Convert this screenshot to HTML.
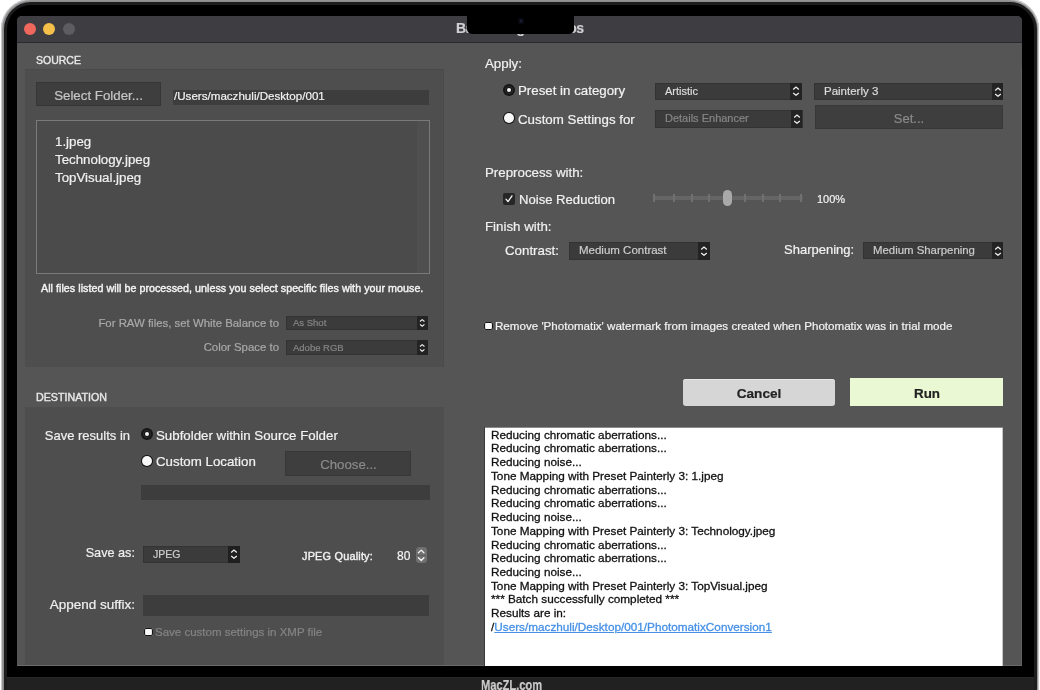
<!DOCTYPE html>
<html><head><meta charset="utf-8"><style>
html,body{margin:0;padding:0;width:1040px;height:690px;overflow:hidden;background:#fff;}
body{position:relative;font-family:"Liberation Sans", sans-serif;}
div,svg{position:absolute;}
.t{white-space:nowrap;will-change:transform;-webkit-text-stroke:0.2px currentColor;}
</style></head><body>
<div style="left:0.6px;top:-1px;width:1038.6px;height:760px;border-radius:30px;background:#8a8a8c;box-shadow:inset 0 0 1.2px 1px #d6d6d8"></div>
<div style="left:3.6px;top:2.3px;width:1033.2px;height:760px;border-radius:27px;background:#1d1d1e"></div>
<div style="left:6.5px;top:5.3px;width:1027px;height:760px;border-radius:24px;background:#000"></div>
<div style="left:6.8px;top:677px;width:1026.8px;height:13px;background:#212121;box-shadow:inset 0 1px 0 #282828"></div>
<div class="t" style="left:481px;top:677.2px;font-size:15px;line-height:15px;color:#cdcdcd;font-weight:bold;transform:scaleX(0.74);transform-origin:0 0;">MacZL.com</div>
<div style="left:17px;top:16px;width:1005px;height:650px;background:#555555;border-radius:5px 5px 0 0;overflow:hidden">
<div style="left:0;top:0;width:1005px;height:26px;background:#3e3d42"></div>
<div style="left:0;top:26px;width:1005px;height:1px;background:#29292b"></div>
</div>
<div style="left:23.8px;top:22.8px;width:12px;height:12px;border-radius:50%;background:#ef675d"></div>
<div style="left:43.4px;top:22.8px;width:12px;height:12px;border-radius:50%;background:#f5c04a"></div>
<div style="left:63.0px;top:22.8px;width:12px;height:12px;border-radius:50%;background:#5d5c61"></div>
<div class="t" style="left:455.60px;top:21px;font-size:14px;line-height:14px;color:#d0d0d2;font-weight:bold;letter-spacing:-0.45px;">Batch Single Photos</div>
<div style="left:467px;top:10px;width:107px;height:24px;background:#000;border-radius:0 0 5px 5px"></div>
<div style="left:517.8px;top:17.5px;width:6px;height:6px;border-radius:50%;background:#0b0c14"></div>
<div style="left:519.8px;top:19.5px;width:2px;height:2px;border-radius:50%;background:#1c2448"></div>
<div class="t" style="left:35.50px;top:55px;font-size:10.5px;line-height:10.5px;color:#e8e8e8;font-weight:normal;-webkit-text-stroke:0.4px #e8e8e8;">SOURCE</div>
<div style="left:25px;top:69px;width:419px;height:298px;background:#4e4e4e;box-shadow:inset 0 1px 0 #4a4a4a, inset -1px 0 0 #4a4a4a"></div>
<div style="left:36px;top:82px;width:125px;height:24px;background:#3e3e3e;box-shadow:inset 0 0 0 1px #363636"></div>
<div class="t" style="left:36.00px;width:125px;text-align:center;top:89px;font-size:13.3px;line-height:13.3px;color:#c6c6c6;font-weight:normal;">Select Folder...</div>
<div style="left:173px;top:90px;width:256px;height:15px;background:#3d3d3d"></div>
<div class="t" style="left:174.30px;top:90px;font-size:11.6px;line-height:11.6px;color:#f2f2f2;font-weight:normal;">/Users/maczhuli/Desktop/001</div>
<div style="left:36px;top:120px;width:394px;height:154px;background:#4b4b4b;box-shadow:inset 0 0 0 1px #7a7a7a"></div>
<div style="left:417px;top:121px;width:12px;height:152px;background:#4f4f4f"></div>
<div class="t" style="left:54.80px;top:135px;font-size:13.3px;line-height:13.3px;color:#f0f0f0;font-weight:normal;">1.jpeg</div>
<div class="t" style="left:55.20px;top:153px;font-size:13.3px;line-height:13.3px;color:#f0f0f0;font-weight:normal;">Technology.jpeg</div>
<div class="t" style="left:55.20px;top:171px;font-size:13.3px;line-height:13.3px;color:#f0f0f0;font-weight:normal;">TopVisual.jpeg</div>
<div class="t" style="left:40.70px;top:283px;font-size:10.7px;line-height:10.7px;color:#f4f4f4;font-weight:normal;-webkit-text-stroke:0.4px #f4f4f4;letter-spacing:0.04px;">All files listed will be processed, unless you select specific files with your mouse.</div>
<div class="t" style="left:29.00px;width:250px;text-align:right;top:318px;font-size:11.4px;line-height:11.4px;color:#a9a9a9;font-weight:normal;">For RAW files, set White Balance to</div>
<div class="t" style="left:29.00px;width:250px;text-align:right;top:342px;font-size:11.4px;line-height:11.4px;color:#a9a9a9;font-weight:normal;">Color Space to</div>
<div style="left:286px;top:315.7px;width:141.5px;height:14.7px;background:#3b3b3b;box-shadow:inset 0 0 0 1px #333"></div>
<div style="left:417.0px;top:315.7px;width:10.5px;height:14.7px;background:#232323"></div>
<svg style="left:419.05px;top:318.25px" width="6.4" height="9.600000000000001" viewBox="0 0 8 12"><path d="M1.2 4.4 L4 2.1 L6.8 4.4 M1.2 8.0 L4 10.3 L6.8 8.0" fill="none" stroke="#f0f0f0" stroke-width="1.40" stroke-linecap="butt" stroke-linejoin="round"/></svg>
<div class="t" style="left:293.00px;top:318px;font-size:9.5px;line-height:9.5px;color:#858585;font-weight:normal;">As Shot</div>
<div style="left:286px;top:340.1px;width:141.5px;height:14.7px;background:#3b3b3b;box-shadow:inset 0 0 0 1px #333"></div>
<div style="left:417.0px;top:340.1px;width:10.5px;height:14.7px;background:#232323"></div>
<svg style="left:419.05px;top:342.65000000000003px" width="6.4" height="9.600000000000001" viewBox="0 0 8 12"><path d="M1.2 4.4 L4 2.1 L6.8 4.4 M1.2 8.0 L4 10.3 L6.8 8.0" fill="none" stroke="#f0f0f0" stroke-width="1.40" stroke-linecap="butt" stroke-linejoin="round"/></svg>
<div class="t" style="left:293.00px;top:343px;font-size:9.5px;line-height:9.5px;color:#858585;font-weight:normal;">Adobe RGB</div>
<div class="t" style="left:35.80px;top:392px;font-size:10.7px;line-height:10.7px;color:#e8e8e8;font-weight:normal;-webkit-text-stroke:0.4px #e8e8e8;">DESTINATION</div>
<div style="left:25px;top:407px;width:419px;height:259px;background:#4e4e4e"></div>
<div class="t" style="left:9.50px;width:120px;text-align:right;top:429px;font-size:13px;line-height:13px;color:#f0f0f0;font-weight:normal;">Save results in</div>
<div style="left:140.8px;top:427.9px;width:12px;height:12px;border-radius:50%;background:#151515"></div>
<div style="left:142.5px;top:429.59999999999997px;width:8.6px;height:8.6px;border-radius:50%;background:#2c2c2c"></div>
<div style="left:143.60000000000002px;top:430.7px;width:6.4px;height:6.4px;border-radius:50%;background:#131313"></div>
<div style="left:144.70000000000002px;top:431.79999999999995px;width:4.2px;height:4.2px;border-radius:50%;background:#f6f6f6"></div>
<div class="t" style="left:156.20px;top:429px;font-size:13.3px;line-height:13.3px;color:#f2f2f2;font-weight:normal;">Subfolder within Source Folder</div>
<div style="left:140.8px;top:455.4px;width:12px;height:12px;border-radius:50%;background:#111"></div>
<div style="left:141.8px;top:456.4px;width:10px;height:10px;border-radius:50%;background:#f8f8f8"></div>
<div class="t" style="left:156.20px;top:455px;font-size:13.3px;line-height:13.3px;color:#f2f2f2;font-weight:normal;">Custom Location</div>
<div style="left:285.3px;top:451.1px;width:125.3px;height:24.5px;background:#3e3e3e;box-shadow:inset 0 0 0 1px #383838, inset 0 -1px 0 #2f2f2f"></div>
<div class="t" style="left:285.50px;width:125px;text-align:center;top:458px;font-size:13.2px;line-height:13.2px;color:#8a8a8a;font-weight:normal;">Choose...</div>
<div style="left:141px;top:484.6px;width:289px;height:15.2px;background:#3d3d3d"></div>
<div class="t" style="left:34.60px;width:100px;text-align:right;top:547px;font-size:12.7px;line-height:12.7px;color:#f0f0f0;font-weight:normal;">Save as:</div>
<div style="left:143.3px;top:545.8px;width:96.5px;height:17px;background:#3b3b3b;box-shadow:inset 0 0 0 1px #333"></div>
<div style="left:228px;top:545.8px;width:11.8px;height:17px;background:#1f1f1f"></div>
<svg style="left:229.9px;top:548.3px" width="8" height="12" viewBox="0 0 8 12"><path d="M1.2 4.4 L4 2.1 L6.8 4.4 M1.2 8.0 L4 10.3 L6.8 8.0" fill="none" stroke="#f0f0f0" stroke-width="1.25" stroke-linecap="butt" stroke-linejoin="round"/></svg>
<div class="t" style="left:153.00px;top:549px;font-size:10.5px;line-height:10.5px;color:#cfcfcf;font-weight:normal;">JPEG</div>
<div class="t" style="left:302.10px;top:551px;font-size:10.9px;line-height:10.9px;color:#f2f2f2;font-weight:normal;-webkit-text-stroke:0.4px #f2f2f2;letter-spacing:0.2px;">JPEG Quality:</div>
<div class="t" style="left:396.70px;top:550px;font-size:12px;line-height:12px;color:#f2f2f2;font-weight:normal;">80</div>
<div style="left:416px;top:547.2px;width:10.8px;height:15.8px;border-radius:3.5px;background:#707070"></div>
<div style="left:416.5px;top:555px;width:9.8px;height:0.8px;background:#5e5e5e"></div>
<svg style="left:416px;top:547.2px" width="11" height="16" viewBox="0 0 11 16"><path d="M2.4 5.8 L5.25 3.1 L7.9 5.8 M2.4 10.8 L5.25 13.5 L7.9 10.8" fill="none" stroke="#f4f4f4" stroke-width="1.3" stroke-linecap="round" stroke-linejoin="round"/></svg>
<div class="t" style="left:14.60px;width:120px;text-align:right;top:598px;font-size:13.5px;line-height:13.5px;color:#f0f0f0;font-weight:normal;">Append suffix:</div>
<div style="left:143.3px;top:595px;width:286px;height:20.5px;background:#3d3d3d"></div>
<div style="left:144.3px;top:627.9px;width:8.5px;height:8px;background:#f8f8f8;border-radius:2px;box-shadow:inset 0 0 0 1.1px #151515"></div>
<div class="t" style="left:155.10px;top:627px;font-size:11.5px;line-height:11.5px;color:#848484;font-weight:normal;">Save custom settings in XMP file</div>
<div style="left:17px;top:665px;width:1005px;height:1px;background:#6a6a6a"></div>
<div style="left:1020.8px;top:66px;width:1.2px;height:600px;background:#5f5f5f"></div>
<div class="t" style="left:485.00px;top:57px;font-size:13.3px;line-height:13.3px;color:#f0f0f0;font-weight:normal;">Apply:</div>
<div style="left:503.2px;top:83.8px;width:12px;height:12px;border-radius:50%;background:#151515"></div>
<div style="left:504.9px;top:85.5px;width:8.6px;height:8.6px;border-radius:50%;background:#2c2c2c"></div>
<div style="left:506.0px;top:86.6px;width:6.4px;height:6.4px;border-radius:50%;background:#131313"></div>
<div style="left:507.09999999999997px;top:87.7px;width:4.2px;height:4.2px;border-radius:50%;background:#f6f6f6"></div>
<div class="t" style="left:518.30px;top:84px;font-size:13.3px;line-height:13.3px;color:#f2f2f2;font-weight:normal;">Preset in category</div>
<div style="left:503.2px;top:112px;width:12px;height:12px;border-radius:50%;background:#111"></div>
<div style="left:504.2px;top:113px;width:10px;height:10px;border-radius:50%;background:#f8f8f8"></div>
<div class="t" style="left:518.30px;top:113px;font-size:13.3px;line-height:13.3px;color:#f2f2f2;font-weight:normal;">Custom Settings for</div>
<div style="left:655px;top:82.8px;width:146.6px;height:17.3px;background:#3b3b3b;box-shadow:inset 0 0 0 1px #333"></div>
<div style="left:790.0px;top:82.8px;width:11.6px;height:17.3px;background:#232323"></div>
<svg style="left:791.8000000000001px;top:85.45px" width="8.0" height="12.0" viewBox="0 0 8 12"><path d="M1.2 4.4 L4 2.1 L6.8 4.4 M1.2 8.0 L4 10.3 L6.8 8.0" fill="none" stroke="#f0f0f0" stroke-width="1.25" stroke-linecap="butt" stroke-linejoin="round"/></svg>
<div class="t" style="left:664.60px;top:86px;font-size:11px;line-height:11px;color:#dcdcdc;font-weight:normal;">Artistic</div>
<div style="left:655px;top:110.2px;width:147.5px;height:17.5px;background:#3b3b3b;box-shadow:inset 0 0 0 1px #333"></div>
<div style="left:790.9px;top:110.2px;width:11.6px;height:17.5px;background:#232323"></div>
<svg style="left:792.7px;top:112.95px" width="8.0" height="12.0" viewBox="0 0 8 12"><path d="M1.2 4.4 L4 2.1 L6.8 4.4 M1.2 8.0 L4 10.3 L6.8 8.0" fill="none" stroke="#f0f0f0" stroke-width="1.25" stroke-linecap="butt" stroke-linejoin="round"/></svg>
<div class="t" style="left:664.60px;top:113px;font-size:11px;line-height:11px;color:#868686;font-weight:normal;">Details Enhancer</div>
<div style="left:814.2px;top:83px;width:188.9px;height:17.4px;background:#3b3b3b;box-shadow:inset 0 0 0 1px #333"></div>
<div style="left:992.1px;top:83px;width:11px;height:17.4px;background:#232323"></div>
<svg style="left:993.6px;top:85.7px" width="8.0" height="12.0" viewBox="0 0 8 12"><path d="M1.2 4.4 L4 2.1 L6.8 4.4 M1.2 8.0 L4 10.3 L6.8 8.0" fill="none" stroke="#f0f0f0" stroke-width="1.25" stroke-linecap="butt" stroke-linejoin="round"/></svg>
<div class="t" style="left:823.70px;top:86px;font-size:11.5px;line-height:11.5px;color:#dcdcdc;font-weight:normal;">Painterly 3</div>
<div style="left:814.9px;top:105.2px;width:188.2px;height:24.2px;background:#3e3e3e;box-shadow:inset 0 0 0 1px #383838, inset 0 -1px 0 #2f2f2f"></div>
<div class="t" style="left:859.00px;width:100px;text-align:center;top:112px;font-size:13px;line-height:13px;color:#8a8a8a;font-weight:normal;">Set...</div>
<div class="t" style="left:485.00px;top:166px;font-size:13.3px;line-height:13.3px;color:#f0f0f0;font-weight:normal;">Preprocess with:</div>
<div style="left:503.2px;top:192.9px;width:11.6px;height:11.8px;background:#262626;border-radius:2px"></div>
<svg style="left:503.2px;top:192.9px" width="12" height="12" viewBox="0 0 12 12"><path d="M3 6.2 L5 8.6 L9 2.8" fill="none" stroke="#f4f4f4" stroke-width="1.3" stroke-linecap="round" stroke-linejoin="round"/></svg>
<div class="t" style="left:519.10px;top:193px;font-size:13.1px;line-height:13.1px;color:#f2f2f2;font-weight:normal;">Noise Reduction</div>
<div style="left:653px;top:196px;width:149.5px;height:4px;background:#656565;border-radius:2px"></div>
<div style="left:652.8px;top:194px;width:2px;height:8px;background:#707070"></div>
<div style="left:672.8px;top:194px;width:2px;height:8px;background:#707070"></div>
<div style="left:690.8px;top:194px;width:2px;height:8px;background:#707070"></div>
<div style="left:708.4px;top:194px;width:2px;height:8px;background:#707070"></div>
<div style="left:743.7px;top:194px;width:2px;height:8px;background:#707070"></div>
<div style="left:761.7px;top:194px;width:2px;height:8px;background:#707070"></div>
<div style="left:779.3px;top:194px;width:2px;height:8px;background:#707070"></div>
<div style="left:800.4px;top:194px;width:2px;height:8px;background:#707070"></div>
<div style="left:722.5px;top:189.5px;width:9px;height:16px;border-radius:4.5px;background:#a9a9a9"></div>
<div class="t" style="left:817.30px;top:194px;font-size:11px;line-height:11px;color:#f2f2f2;font-weight:normal;">100%</div>
<div class="t" style="left:485.00px;top:220px;font-size:13.3px;line-height:13.3px;color:#f0f0f0;font-weight:normal;">Finish with:</div>
<div class="t" style="left:504.80px;top:244px;font-size:13.3px;line-height:13.3px;color:#f2f2f2;font-weight:normal;">Contrast:</div>
<div style="left:569px;top:242px;width:140.5px;height:17.6px;background:#3b3b3b;box-shadow:inset 0 0 0 1px #333"></div>
<div style="left:698.0px;top:242px;width:11.5px;height:17.6px;background:#232323"></div>
<svg style="left:699.75px;top:244.8px" width="8.0" height="12.0" viewBox="0 0 8 12"><path d="M1.2 4.4 L4 2.1 L6.8 4.4 M1.2 8.0 L4 10.3 L6.8 8.0" fill="none" stroke="#f0f0f0" stroke-width="1.25" stroke-linecap="butt" stroke-linejoin="round"/></svg>
<div class="t" style="left:579.20px;top:245px;font-size:11.5px;line-height:11.5px;color:#cdcdcd;font-weight:normal;">Medium Contrast</div>
<div class="t" style="left:783.80px;top:243px;font-size:13px;line-height:13px;color:#f2f2f2;font-weight:normal;">Sharpening:</div>
<div style="left:863.2px;top:242px;width:139.8px;height:17.3px;background:#3b3b3b;box-shadow:inset 0 0 0 1px #333"></div>
<div style="left:992.0px;top:242px;width:11px;height:17.3px;background:#232323"></div>
<svg style="left:993.5px;top:244.65px" width="8.0" height="12.0" viewBox="0 0 8 12"><path d="M1.2 4.4 L4 2.1 L6.8 4.4 M1.2 8.0 L4 10.3 L6.8 8.0" fill="none" stroke="#f0f0f0" stroke-width="1.25" stroke-linecap="butt" stroke-linejoin="round"/></svg>
<div class="t" style="left:873.00px;top:245px;font-size:11.4px;line-height:11.4px;color:#cdcdcd;font-weight:normal;">Medium Sharpening</div>
<div style="left:484.3px;top:321.9px;width:8.5px;height:8.6px;background:#f8f8f8;border-radius:2px;box-shadow:inset 0 0 0 1.1px #151515"></div>
<div class="t" style="left:494.90px;top:320px;font-size:11.6px;line-height:11.6px;color:#f2f2f2;font-weight:normal;">Remove 'Photomatix' watermark from images created when Photomatix was in trial mode</div>
<div style="left:682.5px;top:379.1px;width:152.4px;height:26.6px;border-radius:3px;background:#d6d6d6;box-shadow:inset 0 1px 0 #e6e6e6"></div>
<div class="t" style="left:683.70px;width:150px;text-align:center;top:387px;font-size:13.6px;line-height:13.6px;color:#222;font-weight:bold;">Cancel</div>
<div style="left:850px;top:378.4px;width:153.2px;height:27.7px;background:#eaf8d3"></div>
<div class="t" style="left:851.60px;width:150px;text-align:center;top:387px;font-size:13.4px;line-height:13.4px;color:#222;font-weight:bold;">Run</div>
<div style="left:484.3px;top:427.3px;width:518.7px;height:238.7px;background:#fff;box-shadow:inset 1px 1px 0 #8a8a8a, inset -1px 0 0 #c8c8c8"></div>
<div style="left:484.3px;top:427.3px;width:1.2px;height:238.7px;background:#3a3a3a"></div>
<div class="t" style="left:491.00px;top:429px;font-size:11.76px;line-height:11.76px;color:#111;font-weight:normal;-webkit-text-stroke:0.3px #111;">Reducing chromatic aberrations...</div>
<div class="t" style="left:491.00px;top:442px;font-size:11.76px;line-height:11.76px;color:#111;font-weight:normal;-webkit-text-stroke:0.3px #111;">Reducing chromatic aberrations...</div>
<div class="t" style="left:491.00px;top:456px;font-size:11.76px;line-height:11.76px;color:#111;font-weight:normal;-webkit-text-stroke:0.3px #111;">Reducing noise...</div>
<div class="t" style="left:491.00px;top:470px;font-size:11.76px;line-height:11.76px;color:#111;font-weight:normal;-webkit-text-stroke:0.3px #111;">Tone Mapping with Preset Painterly 3: 1.jpeg</div>
<div class="t" style="left:491.00px;top:484px;font-size:11.76px;line-height:11.76px;color:#111;font-weight:normal;-webkit-text-stroke:0.3px #111;">Reducing chromatic aberrations...</div>
<div class="t" style="left:491.00px;top:497px;font-size:11.76px;line-height:11.76px;color:#111;font-weight:normal;-webkit-text-stroke:0.3px #111;">Reducing chromatic aberrations...</div>
<div class="t" style="left:491.00px;top:511px;font-size:11.76px;line-height:11.76px;color:#111;font-weight:normal;-webkit-text-stroke:0.3px #111;">Reducing noise...</div>
<div class="t" style="left:491.00px;top:525px;font-size:11.76px;line-height:11.76px;color:#111;font-weight:normal;-webkit-text-stroke:0.3px #111;">Tone Mapping with Preset Painterly 3: Technology.jpeg</div>
<div class="t" style="left:491.00px;top:539px;font-size:11.76px;line-height:11.76px;color:#111;font-weight:normal;-webkit-text-stroke:0.3px #111;">Reducing chromatic aberrations...</div>
<div class="t" style="left:491.00px;top:552px;font-size:11.76px;line-height:11.76px;color:#111;font-weight:normal;-webkit-text-stroke:0.3px #111;">Reducing chromatic aberrations...</div>
<div class="t" style="left:491.00px;top:566px;font-size:11.76px;line-height:11.76px;color:#111;font-weight:normal;-webkit-text-stroke:0.3px #111;">Reducing noise...</div>
<div class="t" style="left:491.00px;top:580px;font-size:11.76px;line-height:11.76px;color:#111;font-weight:normal;-webkit-text-stroke:0.3px #111;">Tone Mapping with Preset Painterly 3: TopVisual.jpeg</div>
<div class="t" style="left:491.00px;top:593px;font-size:11.76px;line-height:11.76px;color:#111;font-weight:normal;-webkit-text-stroke:0.3px #111;">*** Batch successfully completed ***</div>
<div class="t" style="left:491.00px;top:607px;font-size:11.76px;line-height:11.76px;color:#111;font-weight:normal;-webkit-text-stroke:0.3px #111;">Results are in:</div>
<div class="t" style="left:491.00px;top:621px;font-size:11.76px;line-height:11.76px;color:#111;font-weight:normal;-webkit-text-stroke:0.3px #111;">/<span style="color:#4690e6;-webkit-text-stroke:0.3px #4690e6;text-decoration:underline">Users/maczhuli/Desktop/001/PhotomatixConversion1</span></div>
</body></html>
